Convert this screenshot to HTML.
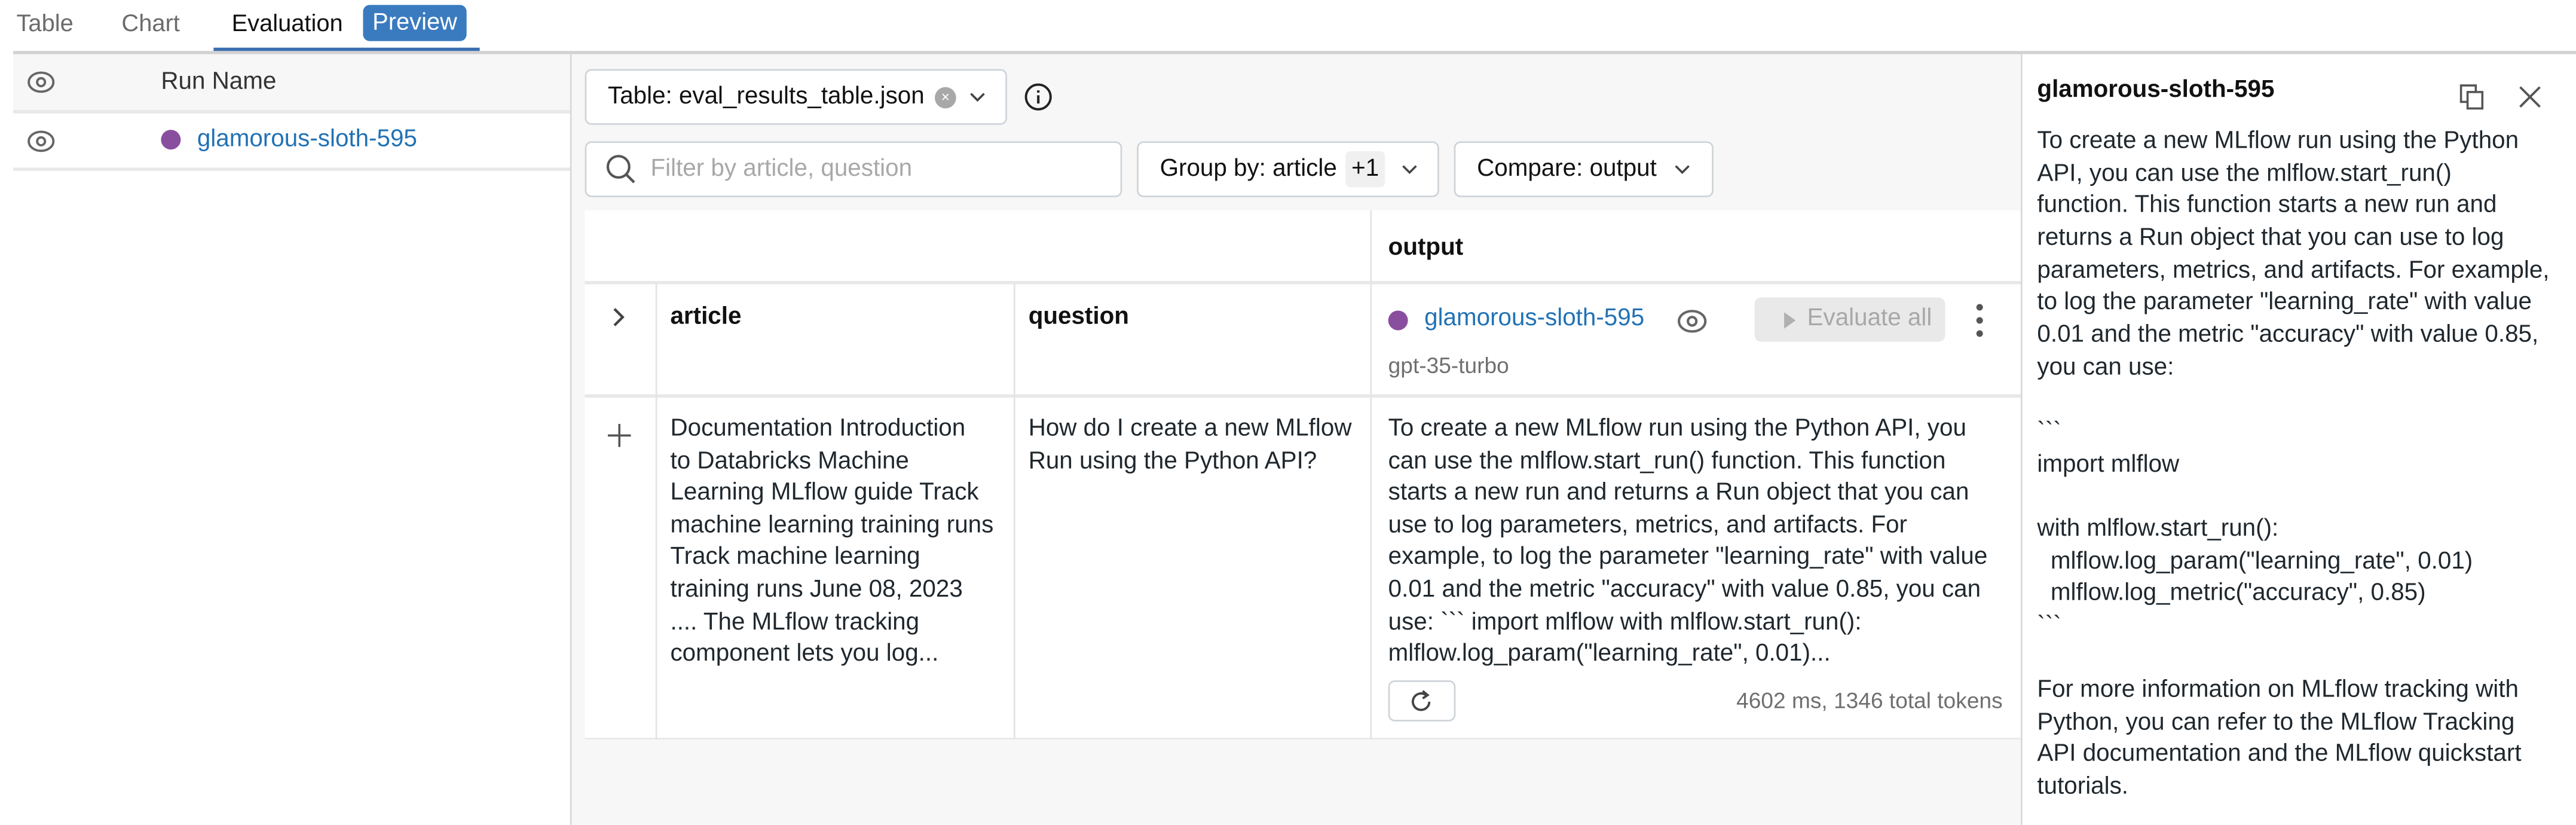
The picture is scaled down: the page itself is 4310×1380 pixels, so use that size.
<!DOCTYPE html>
<html><head><meta charset="utf-8"><style>
*{box-sizing:border-box;margin:0;padding:0}
html,body{width:4310px;height:1380px;overflow:hidden;background:#fff}
#s{position:absolute;left:0;top:0;width:1568px;height:502px;overflow:hidden;transform:scale(2.74872);transform-origin:0 0;font-family:"Liberation Sans",sans-serif;font-size:14.7px;color:#1f272d}
.a{position:absolute;white-space:nowrap}
.btn{position:absolute;border:1px solid #cfd4d9;border-radius:4px;background:#fff}
.lnk{color:#2272b4}
.dot{position:absolute;width:12px;height:12px;border-radius:6px;background:#8a4e9f}
.t{line-height:19.6px}
</style></head><body><div id="s">
<!-- tabs -->
<div class="a" style="left:10px;top:7px;color:#6b6b6b;font-size:14.5px">Table</div>
<div class="a" style="left:74px;top:7px;color:#6b6b6b;font-size:14.5px">Chart</div>
<div class="a" style="left:141px;top:7px;color:#111;font-size:14.5px">Evaluation</div>
<div class="a" style="left:221px;top:3px;width:63px;height:22px;background:#3a7bbf;border-radius:4px;color:#fff;font-size:14.5px;text-align:center;line-height:22px">Preview</div>
<div class="a" style="left:130px;top:29px;width:162px;height:3px;background:#3a6fb0"></div>
<div class="a" style="left:8px;top:31px;width:1560px;height:2px;background:#d2d2d2"></div>
<!-- left -->
<div class="a" style="left:8px;top:33px;width:340px;height:36px;background:#f7f7f7;border-bottom:2px solid #e8e8e8"></div>
<div class="a" style="left:8px;top:102px;width:340px;height:2px;background:#e8e8e8"></div>
<div class="a" style="left:347px;top:33px;width:1px;height:469px;background:#d8d8d8"></div>
<svg class="a" style="left:16px;top:43px" width="18" height="14" viewBox="0 0 18 14"><ellipse cx="9" cy="7" rx="7.5" ry="5.8" fill="none" stroke="#666" stroke-width="1.4"/><circle cx="9" cy="7" r="2.4" fill="none" stroke="#666" stroke-width="1.4"/></svg>
<svg class="a" style="left:16px;top:79px" width="18" height="14" viewBox="0 0 18 14"><ellipse cx="9" cy="7" rx="7.5" ry="5.8" fill="none" stroke="#666" stroke-width="1.4"/><circle cx="9" cy="7" r="2.4" fill="none" stroke="#666" stroke-width="1.4"/></svg>
<div class="a" style="left:98px;top:42px;color:#333">Run Name</div>
<div class="dot" style="left:98px;top:79px"></div>
<div class="a lnk" style="left:120px;top:77px">glamorous-sloth-595</div>
<!-- middle -->
<div class="a" style="left:348px;top:33px;width:882px;height:469px;background:#f7f7f7"></div>
<div class="btn" style="left:356px;top:42px;width:257px;height:34px"></div>
<div class="a" style="left:370px;top:51px;color:#111">Table: eval_results_table.json</div>
<div class="a" style="left:569px;top:53px;width:13px;height:13px;border-radius:7px;background:#a8a8a8;color:#fff;font-size:9px;text-align:center;line-height:13px">×</div>
<svg class="a" style="left:590px;top:55px" width="10" height="8"><path d="M1 2l4 4 4-4" fill="none" stroke="#444" stroke-width="1.3"/></svg>
<svg class="a" style="left:623px;top:50px" width="18" height="18"><circle cx="9" cy="9" r="7.5" fill="none" stroke="#222" stroke-width="1.4"/><path d="M9 8v5M9 5v1.4" stroke="#222" stroke-width="1.5"/></svg>
<div class="btn" style="left:356px;top:86px;width:327px;height:34px"></div>
<svg class="a" style="left:368px;top:93px" width="20" height="20"><circle cx="8.5" cy="8.5" r="6.5" fill="none" stroke="#555" stroke-width="1.5"/><path d="M13 13l5 5" stroke="#555" stroke-width="1.6"/></svg>
<div class="a" style="left:396px;top:95px;color:#a8a8a8">Filter by article, question</div>
<div class="btn" style="left:692px;top:86px;width:184px;height:34px"></div>
<div class="a" style="left:706px;top:95px;color:#111">Group by: article</div>
<div class="a" style="left:819px;top:92px;width:24px;height:22px;background:#f0f0f0;border-radius:3px;text-align:center;line-height:22px;color:#111">+1</div>
<svg class="a" style="left:853px;top:99px" width="10" height="8"><path d="M1 2l4 4 4-4" fill="none" stroke="#444" stroke-width="1.3"/></svg>
<div class="btn" style="left:885px;top:86px;width:158px;height:34px"></div>
<div class="a" style="left:899px;top:95px;color:#111">Compare: output</div>
<svg class="a" style="left:1019px;top:99px" width="10" height="8"><path d="M1 2l4 4 4-4" fill="none" stroke="#444" stroke-width="1.3"/></svg>
<!-- table -->
<div class="a" style="left:356px;top:128px;width:874px;height:322px;background:#fff"></div>
<div class="a" style="left:356px;top:171px;width:874px;height:2px;background:#e8e8e8"></div>
<div class="a" style="left:356px;top:240px;width:874px;height:2px;background:#e8e8e8"></div>
<div class="a" style="left:356px;top:449px;width:874px;height:1px;background:#e8e8e8"></div>
<div class="a" style="left:834px;top:128px;width:1px;height:322px;background:#e4e4e4"></div>
<div class="a" style="left:399px;top:172px;width:1px;height:278px;background:#e4e4e4"></div>
<div class="a" style="left:617px;top:172px;width:1px;height:278px;background:#e4e4e4"></div>
<div class="a" style="left:845px;top:143px;font-weight:bold;color:#111">output</div>
<svg class="a" style="left:371px;top:186px" width="12" height="14"><path d="M3 2l5 5-5 5" fill="none" stroke="#444" stroke-width="1.6"/></svg>
<div class="a" style="left:408px;top:185px;font-weight:bold;color:#111">article</div>
<div class="a" style="left:626px;top:185px;font-weight:bold;color:#111">question</div>
<div class="dot" style="left:845px;top:189px"></div>
<div class="a lnk" style="left:867px;top:186px">glamorous-sloth-595</div>
<svg class="a" style="left:1020px;top:188px" width="20" height="15" viewBox="0 0 18 14"><ellipse cx="9" cy="7" rx="7.5" ry="5.8" fill="none" stroke="#666" stroke-width="1.4"/><circle cx="9" cy="7" r="2.4" fill="none" stroke="#666" stroke-width="1.4"/></svg>
<div class="a" style="left:1068px;top:181px;width:116px;height:27px;background:#e9e9e9;border-radius:4px"></div>
<svg class="a" style="left:1085px;top:189px" width="10" height="12"><path d="M1 1l7 5-7 5z" fill="#b0b0b0"/></svg>
<div class="a" style="left:1100px;top:186px;color:#a8a8a8">Evaluate all</div>
<svg class="a" style="left:1202px;top:184px" width="6" height="22"><circle cx="3" cy="3" r="2" fill="#555"/><circle cx="3" cy="11" r="2" fill="#555"/><circle cx="3" cy="19" r="2" fill="#555"/></svg>
<div class="a" style="left:845px;top:215px;color:#6f6f6f;font-size:13.5px">gpt-35-turbo</div>
<svg class="a" style="left:369px;top:257px" width="16" height="16"><path d="M8 1v14M1 8h14" stroke="#555" stroke-width="1.3"/></svg>
<div class="a t" style="left:408px;top:252px">Documentation Introduction<br>to Databricks Machine<br>Learning MLflow guide Track<br>machine learning training runs<br>Track machine learning<br>training runs June 08, 2023<br>.... The MLflow tracking<br>component lets you log...</div>
<div class="a t" style="left:626px;top:252px">How do I create a new MLflow<br>Run using the Python API?</div>
<div class="a t" style="left:845px;top:252px">To create a new MLflow run using the Python API, you<br>can use the mlflow.start_run() function. This function<br>starts a new run and returns a Run object that you can<br>use to log parameters, metrics, and artifacts. For<br>example, to log the parameter "learning_rate" with value<br>0.01 and the metric "accuracy" with value 0.85, you can<br>use: &#96;&#96;&#96; import mlflow with mlflow.start_run():<br>mlflow.log_param("learning_rate", 0.01)...</div>
<div class="btn" style="left:845px;top:414px;width:41px;height:25px"></div>
<svg class="a" style="left:857px;top:419px" width="16" height="16"><path d="M13 8a5 5 0 1 1-2-4" fill="none" stroke="#444" stroke-width="1.4"/><path d="M9 1.5l3 2.5-3 2" fill="none" stroke="#444" stroke-width="1.4"/></svg>
<div class="a" style="right:349px;top:419px;color:#6f6f6f;font-size:13.5px">4602 ms, 1346 total tokens</div>
<!-- right -->
<div class="a" style="left:1230px;top:33px;width:338px;height:469px;background:#fff;border-left:1px solid #d8d8d8"></div>
<div class="a" style="left:1240px;top:47px;font-weight:bold;color:#111">glamorous-sloth-595</div>
<svg class="a" style="left:1496px;top:50px" width="18" height="18"><rect x="2" y="2" width="9" height="10" fill="none" stroke="#555" stroke-width="1.3"/><rect x="6" y="6" width="9" height="10" fill="#fff" stroke="#555" stroke-width="1.3"/></svg>
<svg class="a" style="left:1532px;top:51px" width="16" height="16"><path d="M2 2l12 12M14 2L2 14" stroke="#555" stroke-width="1.4"/></svg>
<div class="a" style="left:1240px;top:77px;line-height:19.65px;color:#1f272d">To create a new MLflow run using the Python<br>API, you can use the mlflow.start_run()<br>function. This function starts a new run and<br>returns a Run object that you can use to log<br>parameters, metrics, and artifacts. For example,<br>to log the parameter "learning_rate" with value<br>0.01 and the metric "accuracy" with value 0.85,<br>you can use:<br><br>&#96;&#96;&#96;<br>import mlflow<br><br>with mlflow.start_run():<br>&nbsp;&nbsp;mlflow.log_param("learning_rate", 0.01)<br>&nbsp;&nbsp;mlflow.log_metric("accuracy", 0.85)<br>&#96;&#96;&#96;<br><br>For more information on MLflow tracking with<br>Python, you can refer to the MLflow Tracking<br>API documentation and the MLflow quickstart<br>tutorials.</div>
</div></body></html>
